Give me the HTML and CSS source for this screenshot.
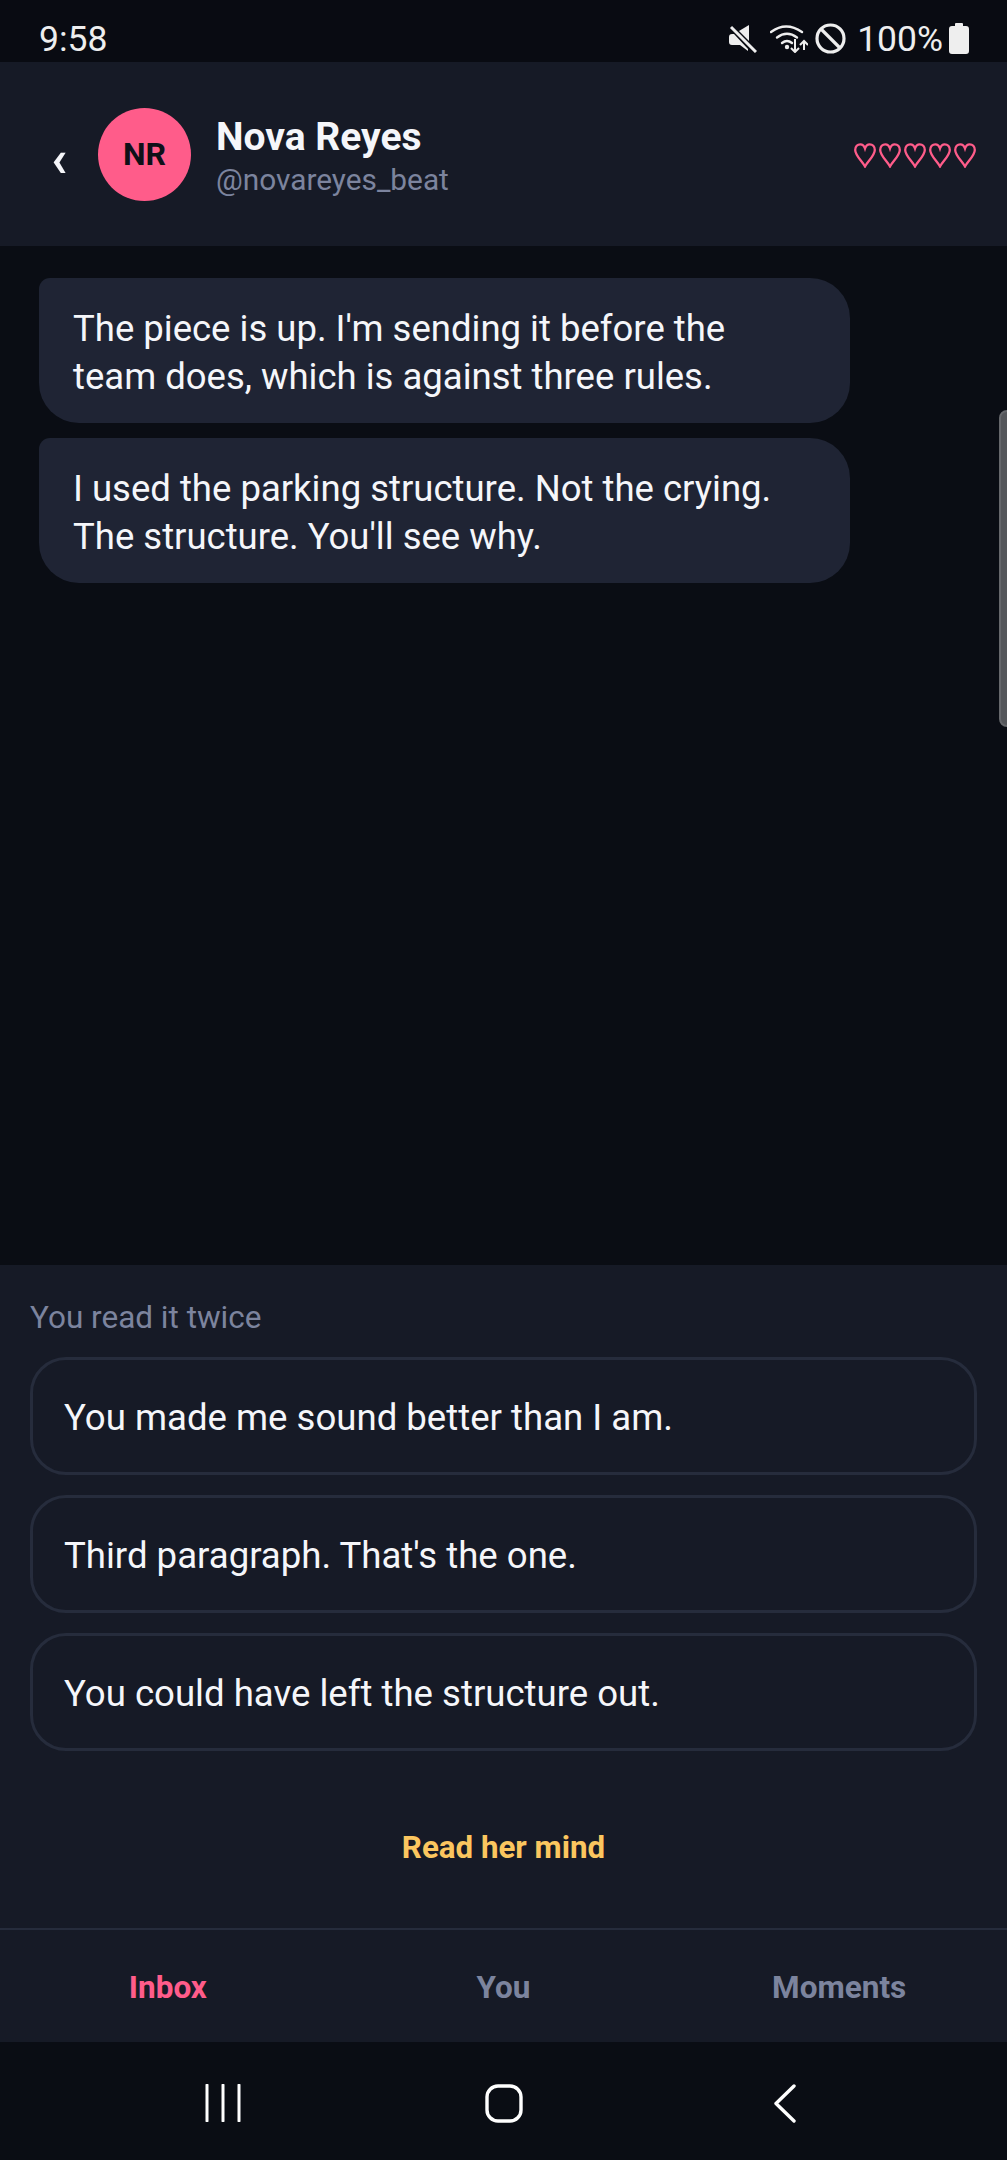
FILE: index.html
```html
<!DOCTYPE html>
<html lang="en">
<head>
<meta charset="UTF-8">
<meta name="viewport" content="width=device-width, initial-scale=1.0">
<title>Nova Reyes</title>
<link rel="stylesheet" href="styles.css">
</head>
<body>

<div class="app">
  <div class="status-bar">
    <span class="clock">9:58</span>
    <div class="status-icons">
      <svg class="icon-mute" width="28" height="29" viewBox="0 0 28 29">
        <path d="M20 1V17L10 7z" fill="#eee"/>
        <path d="M0 13q0-3 3-3h2L19 25v2L11 21H3q-3 0-3-3z" fill="#eee"/>
        <path d="M2 3 27 28" stroke="#eee" stroke-width="3" fill="none"/>
      </svg>
      <svg class="icon-wifi" width="38" height="29" viewBox="0 0 38 29">
        <g fill="none" stroke="#eee" stroke-width="2.4" stroke-linecap="round">
          <path d="M1 8Q16-3 32 8"/>
          <path d="M7 13.500Q17 6 27 13.500"/>
          <path d="M12 19Q17 15 22 19"/>
        </g>
        <circle cx="17" cy="23" r="2.200" fill="#eee"/>
        <g fill="none" stroke="#eee" stroke-width="2">
          <path d="M25 15V28M21 24l4 4 4-4"/>
          <path d="M34 26V17M30 21l4-4 4 4"/>
        </g>
      </svg>
      <svg class="icon-dnd" width="31" height="31" viewBox="0 0 31 31">
        <circle cx="15.500" cy="15.500" r="13.500" fill="none" stroke="#eee" stroke-width="3.200"/>
        <path d="M6 6 25 25" stroke="#eee" stroke-width="3.200"/>
      </svg>
      <span class="battery-text">100%</span>
      <svg class="icon-battery" width="20" height="31" viewBox="0 0 20 31">
        <path d="M6 1q0-1 1-1h6q1 0 1 1v2h3q3 0 3 3v22q0 3-3 3H3q-3 0-3-3V6q0-3 3-3h3z" fill="#eee"/>
      </svg>
    </div>
  </div>

  <header class="chat-header">
    <span class="back-arrow">‹</span>
    <div class="avatar">NR</div>
    <div class="contact">
      <div class="contact-name">Nova Reyes</div>
      <div class="contact-handle">@novareyes_beat</div>
    </div>
    <div class="hearts">
      <svg class="heart" width="22" height="25" viewBox="0 0 22 25"><use href="#heart-shape"/></svg>
      <svg class="heart" width="22" height="25" viewBox="0 0 22 25"><use href="#heart-shape"/></svg>
      <svg class="heart" width="22" height="25" viewBox="0 0 22 25"><use href="#heart-shape"/></svg>
      <svg class="heart" width="22" height="25" viewBox="0 0 22 25"><use href="#heart-shape"/></svg>
      <svg class="heart" width="22" height="25" viewBox="0 0 22 25"><use href="#heart-shape"/></svg>
    </div>
  </header>

  <main class="messages">
    <div class="bubble">The piece is up. I'm sending it before the team does, which is against three rules.</div>
    <div class="bubble">I used the parking structure. Not the crying. The structure. You'll see why.</div>
    <div class="scroll-handle"></div>
  </main>

  <section class="reply-panel">
    <div class="reply-label">You read it twice</div>
    <button class="reply-option">You made me sound better than I am.</button>
    <button class="reply-option">Third paragraph. That's the one.</button>
    <button class="reply-option">You could have left the structure out.</button>
    <button class="mind-button">Read her mind</button>
  </section>

  <nav class="tabs">
    <span class="tab tab-active">Inbox</span>
    <span class="tab">You</span>
    <span class="tab">Moments</span>
  </nav>

  <div class="nav-bar">
    <svg width="36" height="38" viewBox="0 0 36 38">
      <path d="M2 1V37M18 1V37M34 1V37" stroke="#fff" stroke-width="3" stroke-linecap="round"/>
    </svg>
    <svg width="38" height="39" viewBox="0 0 38 39">
      <rect x="2" y="2" width="34" height="35" rx="11" fill="none" stroke="#fff" stroke-width="3.400"/>
    </svg>
    <svg width="22" height="39" viewBox="0 0 22 39">
      <path d="M20 2 2 19.500 20 37" fill="none" stroke="#fff" stroke-width="3.400" stroke-linecap="round" stroke-linejoin="round"/>
    </svg>
  </div>
</div>

<svg class="svg-defs" width="0" height="0">
  <defs>
    <path id="heart-shape" d="M11 23.500C8 18 1.200 12.500 1.200 7C1.200 3.500 3.500 1.300 6.300 1.300C8.500 1.300 10.200 3 11 5.500C11.800 3 13.500 1.300 15.700 1.300C18.500 1.300 20.800 3.500 20.800 7C20.800 12.500 14 18 11 23.500Z"/>
  </defs>
</svg>

</body>
</html>
```

FILE: styles.css
```css
* {
  box-sizing: border-box;
}

body {
  margin: 0;
  padding: 0;
  background-color: #0a0d14;
  font-family: Roboto, "Liberation Sans", sans-serif;
}

.app {
  display: flex;
  flex-direction: column;
  width: 1007px;
  height: 2160px;
  overflow: hidden;
}

.svg-defs {
  display: block;
}

.status-bar {
  display: flex;
  align-items: center;
  justify-content: space-between;
  flex: 0 0 62px;
  padding: 15px 38px 0 39px;
  background-color: #090b12;
  color: #eee;
  font-size: 35.500px;
}

.status-icons {
  display: flex;
  align-items: center;
}

.icon-mute {
  margin-right: 13px;
}

.icon-dnd {
  margin-left: 7px;
}

.battery-text {
  margin: 0 6px 0 11px;
}

.chat-header {
  display: flex;
  align-items: center;
  flex: 0 0 184px;
  padding: 0 31px 0 51px;
  background-color: #161a26;
}

.back-arrow {
  width: 47px;
  margin-top: 10px;
  color: #f5f6fa;
  font-size: 52px;
  font-weight: 700;
  line-height: 52px;
}

.avatar {
  display: flex;
  align-items: center;
  justify-content: center;
  width: 93px;
  height: 93px;
  border-radius: 50%;
  background-color: #ff5c8a;
  color: #0f1018;
  font-size: 32px;
  font-weight: 700;
}

.contact {
  flex: 1;
  margin-left: 25px;
}

.contact-name {
  margin-top: 4px;
  color: #f5f6fa;
  font-size: 39px;
  font-weight: 700;
  line-height: 46px;
}

.contact-handle {
  margin-top: 2px;
  color: #7c849e;
  font-size: 29.800px;
  line-height: 36px;
}

.hearts {
  display: flex;
  gap: 3px;
  margin-top: 3px;
}

.heart {
  fill: none;
  stroke: #ff5c8a;
  stroke-width: 2.300;
}

.messages {
  position: relative;
  display: flex;
  flex-direction: column;
  align-items: flex-start;
  gap: 15px;
  flex: 1;
  padding: 32px 39px;
}

.bubble {
  width: 811px;
  padding: 27px 44px 22px 34px;
  border-radius: 11px 40px 40px 40px;
  background-color: #1f2434;
  color: #f5f6fa;
  font-size: 36.500px;
  line-height: 48px;
}

.scroll-handle {
  position: absolute;
  top: 164px;
  right: -8px;
  width: 16px;
  height: 317px;
  border: 2px solid #66686c;
  border-radius: 8px;
  background-color: #55575b;
}

.reply-panel {
  display: flex;
  flex-direction: column;
  flex: 0 0 663px;
  padding: 35px 30px 0;
  background-color: #161a26;
}

.reply-label {
  margin-bottom: 21px;
  color: #7c849e;
  font-size: 31.500px;
  line-height: 36px;
}

.reply-option {
  height: 118px;
  margin-bottom: 20px;
  padding: 3px 31px 0;
  border: 3px solid #262c3c;
  border-radius: 36px;
  background: none;
  color: #f5f6fa;
  font-family: inherit;
  font-size: 36.600px;
  text-align: left;
}

.mind-button {
  margin-top: 59px;
  padding: 0;
  border: none;
  background: none;
  color: #fbc65f;
  font-family: inherit;
  font-size: 31.300px;
  font-weight: 700;
  line-height: 36px;
}

.tabs {
  display: flex;
  align-items: center;
  flex: 0 0 114px;
  padding-top: 2px;
  border-top: 2px solid #262c3c;
  background-color: #161a26;
}

.tab {
  flex: 1;
  color: #7c849e;
  font-size: 31.500px;
  font-weight: 700;
  text-align: center;
}

.tab-active {
  color: #ff5c8a;
}

.nav-bar {
  display: grid;
  grid-template-columns: repeat(3, 1fr);
  justify-items: center;
  align-items: center;
  flex: 0 0 118px;
  padding: 4px 82px 0;
  background-color: #0a0d14;
}
```
